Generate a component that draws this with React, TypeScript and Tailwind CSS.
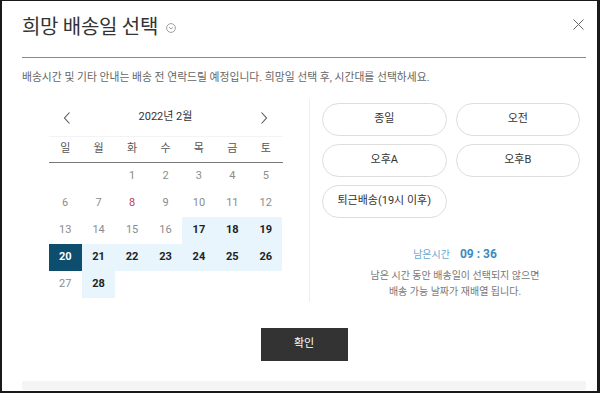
import React from 'react';

// 달력 데이터
type Kind = 'past' | 'holiday' | 'open' | 'selected';
type Day = { d: number; kind: Kind } | null;

const weekDays = ['일', '월', '화', '수', '목', '금', '토'];

function buildDays(): Day[] {
    const list: Day[] = [null, null];
    for (let d = 1; d <= 28; d++) {
        let kind: Kind = 'past';
        if (d === 8) kind = 'holiday';
        if ((d >= 17 && d <= 26) || d === 28) kind = 'open';
        if (d === 20) kind = 'selected';
        list.push({ d, kind });
    }
    return list;
}

const slots = ['종일', '오전', '오후A', '오후B', '퇴근배송(19시 이후)'];

function Chevron({ dir }: { dir: 'left' | 'right' }) {
    return (
        <svg width="8" height="12" viewBox="0 0 8 12" fill="none" stroke="#555" strokeWidth="1.1">
            {dir === 'left' ? <path d="M6.5 0.5 L1.5 6 L6.5 11.5" /> : <path d="M1.5 0.5 L6.5 6 L1.5 11.5" />}
        </svg>
    );
}

export default function App() {
    const days = buildDays();

    return (
        <div
            className="w-[600px] h-[393px] bg-white border-t border-l-2 border-r-[3px] border-b-2 border-[#1a1a1a] flex flex-col overflow-hidden"
            style={{ fontFamily: "Roboto, 'Noto Sans CJK KR', sans-serif" }}
        >
            <div className="mx-[20px] mr-[11px] flex flex-col">
                {/* 헤더 */}
                <div className="h-[57px] border-b border-[#8a8a8a] flex items-start justify-between pt-[13px]">
                    <div className="flex items-center gap-[8px]">
                        <h1 className="text-[20px] leading-[26px] text-[#333] font-normal tracking-[-0.3px]">희망 배송일 선택</h1>
                        <svg width="10" height="10" viewBox="0 0 10 10" fill="none" stroke="#888" strokeWidth="0.8" className="mt-[2px]">
                            <circle cx="5" cy="5" r="4.4" />
                            <path d="M3 4.2 L5 6 L7 4.2" />
                        </svg>
                    </div>
                    <svg width="11" height="11" viewBox="0 0 11 11" stroke="#666" strokeWidth="1" className="mt-[5px] mr-[2px]">
                        <path d="M0.5 0.5 L10.5 10.5 M10.5 0.5 L0.5 10.5" />
                    </svg>
                </div>

                <p className="mt-[13px] text-[10.8px] leading-[14px] text-[#666]">
                    배송시간 및 기타 안내는 배송 전 연락드릴 예정입니다. 희망일 선택 후, 시간대를 선택하세요.
                </p>

                {/* 본문 */}
                <div className="mt-[14px] h-[203px] flex">
                    <div className="w-[288px] border-r border-[#eeeeee] flex justify-center">
                        <div className="w-[234px]">
                            <div className="h-[38px] border-b border-[#f3f3f3] flex items-center justify-between px-[14px]">
                                <Chevron dir="left" />
                                <span className="text-[11px] text-[#333]">2022년 2월</span>
                                <Chevron dir="right" />
                            </div>
                            <div className="grid grid-cols-7 h-[26px] border-b border-[#777] items-center">
                                {weekDays.map(w => (
                                    <span key={w} className="text-center text-[11px] text-[#555]">{w}</span>
                                ))}
                            </div>
                            <div className="grid grid-cols-7">
                                {days.map((day, i) => {
                                    if (!day) return <div key={i} className="h-[27px]" />;
                                    let cls = 'text-[#8c8c8c]';
                                    if (day.kind === 'holiday') cls = 'text-[#c0405a]';
                                    if (day.kind === 'open') cls = 'bg-[#e9f5fc] text-[#222] font-bold';
                                    if (day.kind === 'selected') cls = 'bg-[#0d4e6f] text-white font-bold';
                                    return (
                                        <div key={i} className={`h-[27px] flex items-center justify-center text-[11px] ${cls}`}>
                                            {day.d}
                                        </div>
                                    );
                                })}
                            </div>
                        </div>
                    </div>

                    <div className="flex-1 pl-[12px] pr-[6px] pt-[4px] flex flex-col">
                        <div className="grid grid-cols-2 gap-x-[9px] gap-y-[8px]">
                            {slots.map(s => (
                                <button
                                    key={s}
                                    className="h-[33px] rounded-full border border-[#dddddd] bg-white text-[11px] text-[#333]"
                                >
                                    {s}
                                </button>
                            ))}
                        </div>
                        <div className="mt-[27px] flex items-center justify-center gap-[10px] pl-[8px]">
                            <span className="text-[10px] text-[#6aa8d0]">남은시간</span>
                            <span className="text-[12px] font-bold text-[#3b8bc2]">09 : 36</span>
                        </div>
                        <div className="mt-[5px] text-center text-[10px] leading-[16px] text-[#777] pl-[8px]">
                            <p>남은 시간 동안 배송일이 선택되지 않으면</p>
                            <p>배송 가능 날짜가 재배열 됩니다.</p>
                        </div>
                    </div>
                </div>

                <div className="mt-[26px] flex justify-center">
                    <button className="w-[87px] h-[33px] bg-[#333] text-white text-[11px]">확인</button>
                </div>

                <div className="mt-[20px] h-[9px] bg-[#f5f5f5]" />
            </div>
        </div>
    );
}
